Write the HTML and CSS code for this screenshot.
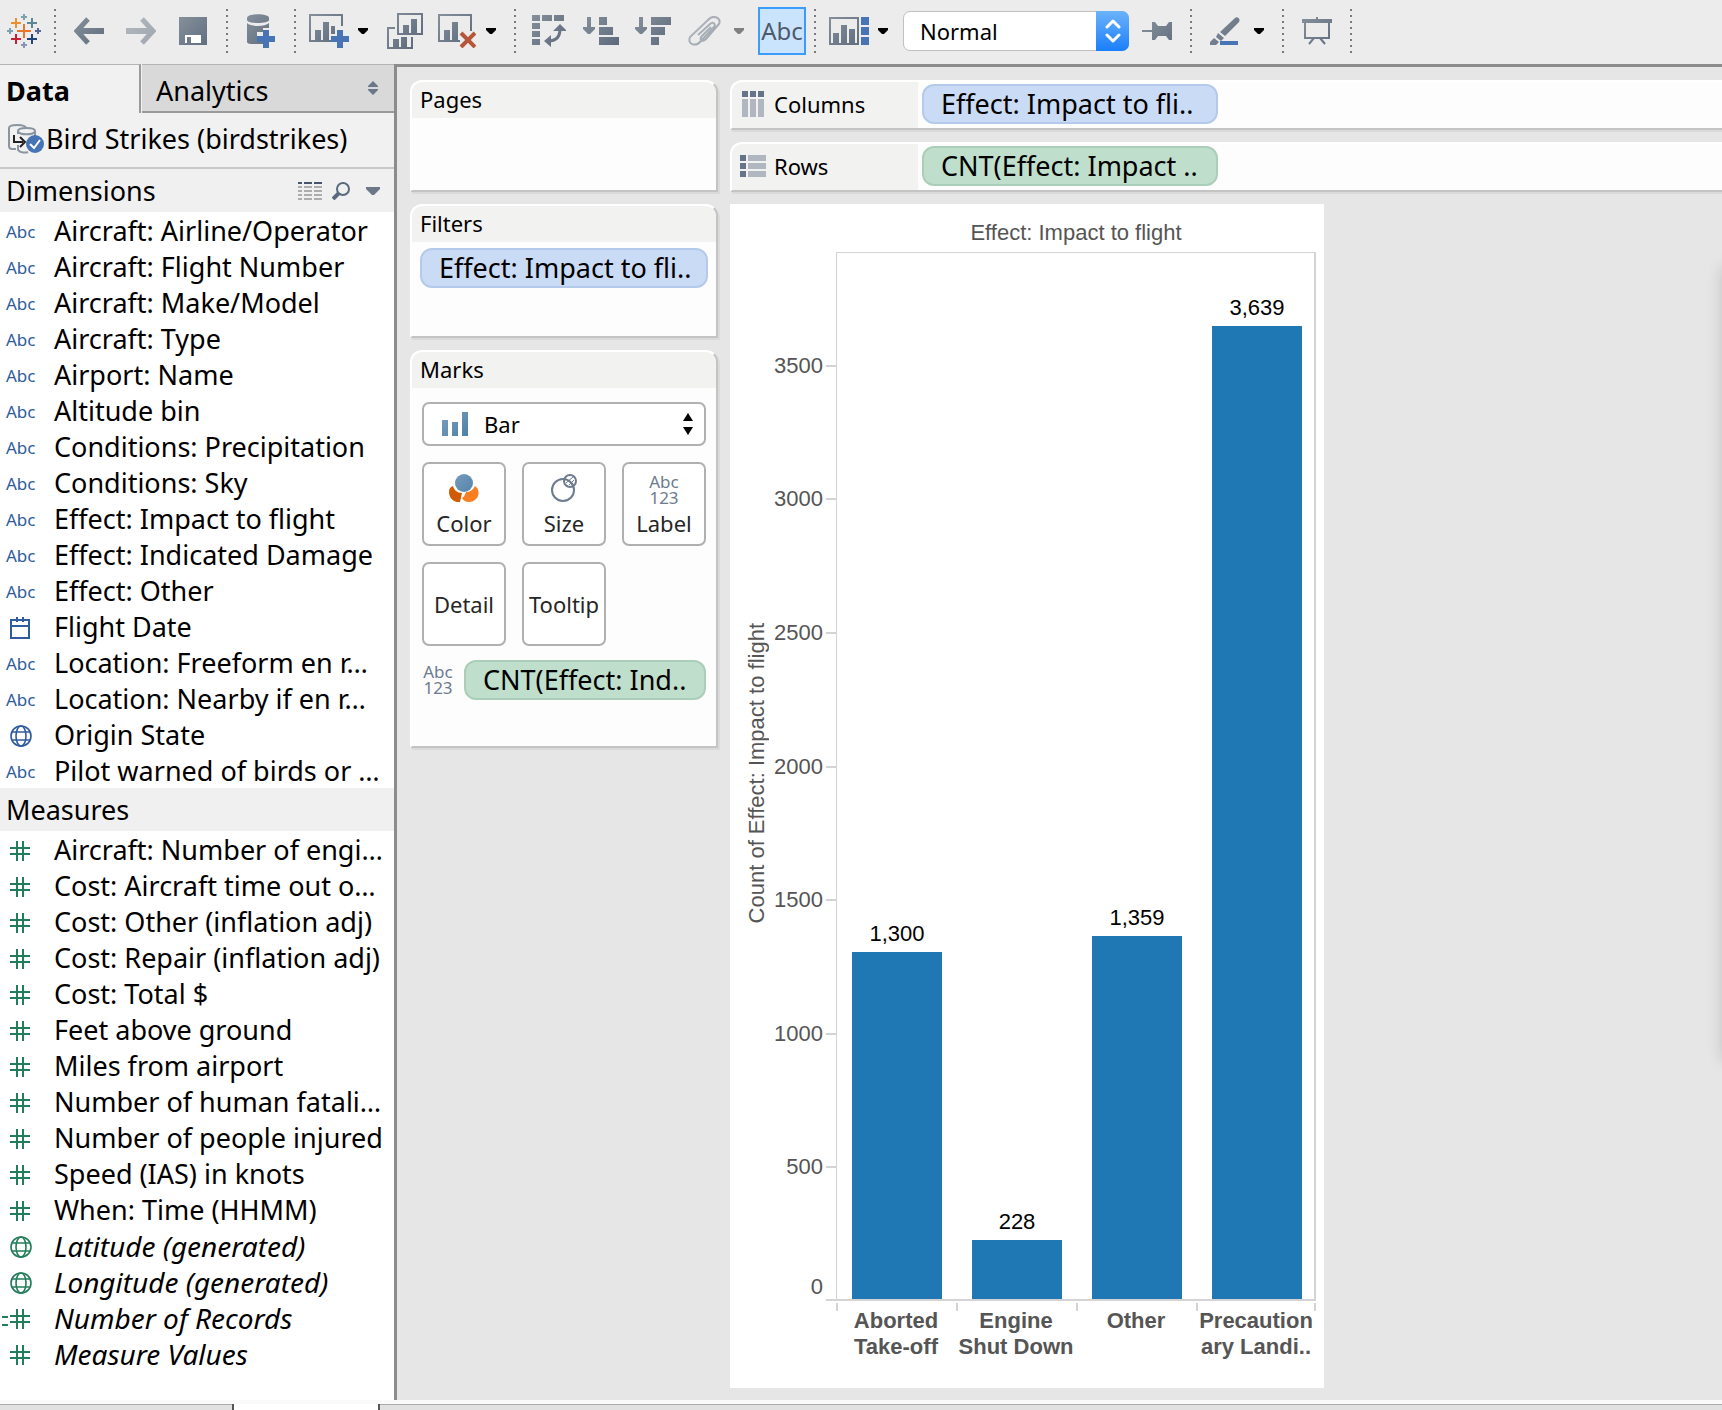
FILE: index.html
```html
<!DOCTYPE html>
<html lang="en">
<head>
<meta charset="utf-8">
<meta name="viewport" content="width=device-width, initial-scale=1">
<title>Bird Strikes</title>
<link rel="stylesheet" href="styles.css">
</head>
<body>
<svg class="defs" width="0" height="0" aria-hidden="true">
  <defs>
    <linearGradient id="slate" gradientUnits="userSpaceOnUse" x1="0" y1="0" x2="40" y2="40">
      <stop offset="0" stop-color="#86909b"/><stop offset="1" stop-color="#526074"/>
    </linearGradient>
    <linearGradient id="steel" gradientUnits="userSpaceOnUse" x1="0" y1="0" x2="26" y2="26">
      <stop offset="0" stop-color="#7d9fbf"/><stop offset="1" stop-color="#4a7fa5"/>
    </linearGradient>
    <symbol id="hash" viewBox="0 0 20 20"><path d="M7 0v20M13 0v20M0 7h20M0 13h20" fill="none" stroke="currentColor" stroke-width="2"/></symbol>
    <symbol id="globe" viewBox="0 0 22 22"><g fill="none" stroke="currentColor" stroke-width="1.6"><circle cx="11" cy="11" r="10"/><ellipse cx="11" cy="11" rx="5" ry="10"/><path d="M2 7h18M2 15h18"/></g></symbol>
    <symbol id="calendar" viewBox="0 0 20 22"><path d="M1 3h18v18H1zM1 9h18M7 0v5M13 0v5" fill="none" stroke="currentColor" stroke-width="2"/></symbol>
    <symbol id="caret" viewBox="0 0 10 6"><path d="M0 0h10v2L6 6H4L0 2z" fill="currentColor"/></symbol>
  </defs>
</svg>

<header class="toolbar">
  <button class="logo" aria-label="Start page">
    <svg width="34" height="34" viewBox="0 0 34 34" fill="none" stroke-width="2">
      <path d="M17 10v14M10 17h14" stroke="#e8762c"/>
      <path d="M9 4v10M4 9h10" stroke="#eb912c"/>
      <path d="M25 4v10M20 9h10" stroke="#5b879b"/>
      <path d="M9 20v10M4 25h10" stroke="#c72035"/>
      <path d="M25 20v10M20 25h10" stroke="#1f447e"/>
      <path d="M17 0v6M14 3h6M3 14v6M0 17h6" stroke="#7aa0b2"/>
      <path d="M31 14v6M28 17h6" stroke="#5c6692"/>
      <path d="M17 28v6M14 31h6" stroke="#8c93b5"/>
    </svg>
  </button>
  <span class="sep"></span>
  <button class="tool" aria-label="Back"><svg width="30" height="28" viewBox="0 0 30 28" fill="none" stroke="url(#slate)"><path d="M14 2L3 14l11 12" stroke-width="5"/><path d="M3 14h27" stroke-width="6"/></svg></button>
  <button class="tool faded" aria-label="Forward"><svg width="30" height="28" viewBox="0 0 30 28" fill="none" stroke="url(#slate)"><path d="M16 2l11 12-11 12" stroke-width="5"/><path d="M0 14h27" stroke-width="6"/></svg></button>
  <button class="tool" aria-label="Save"><svg width="28" height="28" viewBox="0 0 28 28"><path d="M0 0h28v28H0z" fill="url(#slate)"/><path d="M6 18h16v8H6z" fill="#fff"/><path d="M8 20h4v6H8z" fill="url(#slate)"/></svg></button>
  <span class="sep"></span>
  <button class="tool" aria-label="New data source"><svg width="28" height="34" viewBox="0 0 28 34"><path d="M0 4c0-5 22-5 22 0v2c0 4-22 4-22 0z" fill="url(#slate)"/><path d="M0 9c4 4 18 4 22 0v5h-6v4h-6v8h6v4H4c-2 0-4-1-4-2z" fill="url(#slate)"/><path d="M16 16h6v6h6v6h-6v6h-6v-6h-6v-6h6z" fill="#4674b5"/></svg></button>
  <span class="sep"></span>
  <button class="tool" aria-label="New worksheet"><svg width="40" height="34" viewBox="0 0 40 34"><path d="M1 1h32v26H1z" fill="none" stroke="url(#slate)" stroke-width="2"/><path d="M6 16h6v10H6zM14 8h6v18h-6z" fill="url(#slate)"/><path d="M26 12h10v14H20v-6h6z" fill="#ececec"/><path d="M22 12h4v8h-4z" fill="url(#slate)"/><path d="M28 16h6v6h6v6h-6v6h-6v-6h-6v-6h6z" fill="#4674b5"/></svg></button>
  <button class="drop" aria-label="New worksheet options"><svg width="10" height="6"><use href="#caret"/></svg></button>
  <button class="tool" aria-label="Duplicate"><svg width="36" height="36" viewBox="0 0 36 36"><path d="M8 15H1v20h24V24" fill="none" stroke="url(#slate)" stroke-width="2"/><path d="M6 26h6v8H6zM14 24h6v10h-6z" fill="url(#slate)"/><path d="M11 1h24v20H11z" fill="#ececec" stroke="url(#slate)" stroke-width="2"/><path d="M16 12h6v8h-6zM24 6h6v14h-6z" fill="url(#slate)"/></svg></button>
  <button class="tool" aria-label="Clear sheet"><svg width="38" height="34" viewBox="0 0 38 34"><path d="M22 27H1V1h32v16" fill="none" stroke="url(#slate)" stroke-width="2"/><path d="M6 16h6v10H6zM14 8h6v18h-6z" fill="url(#slate)"/><path d="M23 19l14 14M37 19L23 33" stroke="#b5553a" stroke-width="4"/></svg></button>
  <button class="drop" aria-label="Clear options"><svg width="10" height="6"><use href="#caret"/></svg></button>
  <span class="sep"></span>
  <button class="tool" aria-label="Swap rows and columns"><svg width="34" height="32" viewBox="0 0 34 32"><path d="M0 0h8v6H0zM10 0h10v6H10zM22 0h10v6H22zM0 8h8v6H0zM0 16h8v6H0zM0 24h8v6H0z" fill="url(#slate)"/><path d="M28 14c0 8-4 12-12 12" fill="none" stroke="url(#slate)" stroke-width="3"/><path d="M28 9l7 7H21zM12 26l7-6v12z" fill="url(#slate)"/></svg></button>
  <button class="tool" aria-label="Sort ascending"><svg width="36" height="28" viewBox="0 0 36 28"><path d="M4 0h4v10h4v2l-5 5h-2l-5-5v-2h4zM16 0h8v8h-8zM16 10h14v8H16zM16 20h20v8H16z" fill="url(#slate)"/></svg></button>
  <button class="tool" aria-label="Sort descending"><svg width="36" height="28" viewBox="0 0 36 28"><path d="M4 0h4v10h4v2l-5 5h-2l-5-5v-2h4zM16 0h20v8H16zM16 10h14v8H16zM16 20h8v8h-8z" fill="url(#slate)"/></svg></button>
  <button class="tool faded" aria-label="Group"><svg width="34" height="30" viewBox="0 0 34 30" fill="none" stroke="url(#slate)" stroke-width="2"><path d="M10 19L22 8c3-3 6 0 4 3L13 25c-5 6-14 4-11-4L20 4c5-6 14-2 11 4L18 23c-4 4-7 0-4-3l9-9"/></svg></button>
  <button class="drop muted" aria-label="Group options"><svg width="10" height="6"><use href="#caret"/></svg></button>
  <button class="tool toggle" aria-pressed="true">Abc</button>
  <span class="sep"></span>
  <button class="tool" aria-label="Show cards"><svg width="40" height="28" viewBox="0 0 40 28"><path d="M1 1h28v26H1z" fill="none" stroke="url(#slate)" stroke-width="2"/><path d="M4 16h6v10H4zM12 8h6v18h-6zM20 12h6v14h-6z" fill="url(#slate)"/><path d="M32 0h8v8h-8zM32 10h8v8h-8zM32 20h8v8h-8z" fill="#4674b5"/></svg></button>
  <button class="drop" aria-label="Card options"><svg width="10" height="6"><use href="#caret"/></svg></button>
  <div class="fit">
    <select aria-label="Fit"><option>Normal</option><option>Fit Width</option><option>Fit Height</option><option>Entire View</option></select>
    <span class="fit-arrows"><svg width="16" height="24" viewBox="0 0 16 24" fill="none" stroke="#fff" stroke-width="3" stroke-linecap="round" stroke-linejoin="round"><path d="M2 8l6-6 6 6M2 16l6 6 6-6"/></svg></span>
  </div>
  <button class="tool" aria-label="Fix axes"><svg width="30" height="18" viewBox="0 0 30 18"><path d="M0 8h10v2H0zM10 0h3l3 4h8l3-4h3v18h-3l-3-4h-8l-3 4h-3z" fill="url(#slate)"/></svg></button>
  <span class="sep"></span>
  <button class="tool" aria-label="Highlight"><svg width="30" height="28" viewBox="0 0 30 28"><path d="M25 1c2-2 6 1 4 4L15 19l-5-4z" fill="url(#slate)"/><path d="M8 16l6 5-3 3-5-4zM4 21l5 4-3 3H0v-3z" fill="url(#slate)"/><path d="M10 24h18v4H10z" fill="#4674b5"/></svg></button>
  <button class="drop" aria-label="Highlight options"><svg width="10" height="6"><use href="#caret"/></svg></button>
  <span class="sep"></span>
  <button class="tool" aria-label="Presentation mode"><svg width="30" height="28" viewBox="0 0 30 28"><path d="M14 0h2v2h14v4H0V2h14z" fill="url(#slate)"/><path d="M3 6v15h24V6M12 21l-5 6M18 21l5 6" fill="none" stroke="url(#slate)" stroke-width="2"/></svg></button>
  <span class="sep"></span>
</header>

<div class="main">
  <aside class="side">
    <div class="tabs" role="tablist">
      <button class="tab current" role="tab" aria-selected="true">Data</button>
      <button class="tab" role="tab" aria-selected="false">Analytics
        <svg width="10" height="14" viewBox="0 0 10 14"><path d="M5 0l5 5v1H0V5zM5 14l5-5V8H0v1z" fill="#6c7887"/></svg>
      </button>
    </div>
    <div class="source">
      <svg width="36" height="30" viewBox="0 0 36 30"><g fill="none" stroke="#8b95a1" stroke-width="2"><path d="M8 25H4c-2 0-3-1-3-3V4c0-4 16-4 17 0"/><path d="M10 10V7c0-4 17-4 17 0v5M10 8c3 3 14 3 17 0M10 21v5c2 3 8 3 10 2"/></g><path d="M6 11v7h9M12 13l5 5-5 5" fill="none" stroke="#222" stroke-width="2"/><circle cx="27" cy="20" r="9" fill="#4674b5"/><path d="M22 20l4 4 6-8" fill="none" stroke="#fff" stroke-width="2"/></svg>
      <span>Bird Strikes (birdstrikes)</span>
    </div>
    <div class="section">
      <h2>Dimensions</h2>
      <button aria-label="View data"><svg width="24" height="18" viewBox="0 0 24 18"><path d="M0 1h4M6 1h8M16 1h8" stroke="#46556b" stroke-width="2"/><path d="M0 5h4M6 5h8M16 5h8M0 9h4M6 9h8M16 9h8M0 13h4M6 13h8M16 13h8M0 17h4M6 17h8M16 17h8" stroke="#adadad" stroke-width="2"/></svg></button>
      <button aria-label="Find field"><svg width="18" height="18" viewBox="0 0 18 18" fill="none" stroke="#5a697c"><circle cx="11" cy="7" r="6" stroke-width="2"/><path d="M7 11l-6 6" stroke-width="4"/></svg></button>
      <button aria-label="Field options"><svg width="14" height="8" viewBox="0 0 14 8"><path d="M0 0h14v2L8 8H6L0 2z" fill="#6c7887"/></svg></button>
    </div>
    <ul class="fields dims">
      <li><i class="abc">Abc</i>Aircraft: Airline/Operator</li>
      <li><i class="abc">Abc</i>Aircraft: Flight Number</li>
      <li><i class="abc">Abc</i>Aircraft: Make/Model</li>
      <li><i class="abc">Abc</i>Aircraft: Type</li>
      <li><i class="abc">Abc</i>Airport: Name</li>
      <li><i class="abc">Abc</i>Altitude bin</li>
      <li><i class="abc">Abc</i>Conditions: Precipitation</li>
      <li><i class="abc">Abc</i>Conditions: Sky</li>
      <li><i class="abc">Abc</i>Effect: Impact to flight</li>
      <li><i class="abc">Abc</i>Effect: Indicated Damage</li>
      <li><i class="abc">Abc</i>Effect: Other</li>
      <li><i><svg width="20" height="22"><use href="#calendar"/></svg></i>Flight Date</li>
      <li><i class="abc">Abc</i>Location: Freeform en r…</li>
      <li><i class="abc">Abc</i>Location: Nearby if en r…</li>
      <li><i><svg width="22" height="22"><use href="#globe"/></svg></i>Origin State</li>
      <li><i class="abc">Abc</i>Pilot warned of birds or …</li>
    </ul>
    <div class="section"><h2>Measures</h2></div>
    <ul class="fields measures">
      <li><i><svg width="20" height="20"><use href="#hash"/></svg></i>Aircraft: Number of engi…</li>
      <li><i><svg width="20" height="20"><use href="#hash"/></svg></i>Cost: Aircraft time out o…</li>
      <li><i><svg width="20" height="20"><use href="#hash"/></svg></i>Cost: Other (inflation adj)</li>
      <li><i><svg width="20" height="20"><use href="#hash"/></svg></i>Cost: Repair (inflation adj)</li>
      <li><i><svg width="20" height="20"><use href="#hash"/></svg></i>Cost: Total $</li>
      <li><i><svg width="20" height="20"><use href="#hash"/></svg></i>Feet above ground</li>
      <li><i><svg width="20" height="20"><use href="#hash"/></svg></i>Miles from airport</li>
      <li><i><svg width="20" height="20"><use href="#hash"/></svg></i>Number of human fatali…</li>
      <li><i><svg width="20" height="20"><use href="#hash"/></svg></i>Number of people injured</li>
      <li><i><svg width="20" height="20"><use href="#hash"/></svg></i>Speed (IAS) in knots</li>
      <li><i><svg width="20" height="20"><use href="#hash"/></svg></i>When: Time (HHMM)</li>
      <li class="generated"><i><svg width="22" height="22"><use href="#globe"/></svg></i>Latitude (generated)</li>
      <li class="generated"><i><svg width="22" height="22"><use href="#globe"/></svg></i>Longitude (generated)</li>
      <li class="generated calculated"><i><svg width="20" height="20"><use href="#hash"/></svg></i>Number of Records</li>
      <li class="generated"><i><svg width="20" height="20"><use href="#hash"/></svg></i>Measure Values</li>
    </ul>
  </aside>

  <main class="work">
    <div class="cards">
      <section class="card pages"><h3>Pages</h3></section>
      <section class="card filters"><h3>Filters</h3><button class="pill blue">Effect: Impact to fli..</button></section>
      <section class="card marks">
        <h3>Marks</h3>
        <div class="mark-type">
          <select aria-label="Mark type"><option>Bar</option><option>Line</option><option>Area</option></select>
          <svg class="type-icon" width="26" height="24" viewBox="0 0 26 24"><path d="M0 8h6v16H0zM10 10h6v14h-6zM20 0h6v24h-6z" fill="url(#steel)"/></svg>
          <svg class="type-arrows" width="10" height="22" viewBox="0 0 10 22"><path d="M5 0l5 8H0zM5 22l5-8H0z"/></svg>
        </div>
        <div class="mark-buttons">
          <button class="with-icon"><svg width="30" height="28" viewBox="0 0 30 28"><path d="M0 18c0-3 1-5 4-6 1 4 4 7 9 7l-2 9C5 29 0 24 0 18z" fill="#d05a05"/><path d="M17 18c4 0 7-2 9-6 7 5 3 16-6 16-3 0-5-1-7-4 2-1 3-3 4-6z" fill="#f77f22"/><circle cx="15" cy="9" r="9" fill="url(#steel)"/></svg>Color</button>
          <button class="with-icon"><svg width="26" height="28" viewBox="0 0 26 28" fill="none" stroke="#6c7b90" stroke-width="2"><circle cx="12" cy="16" r="11"/><circle cx="19" cy="7" r="6"/><path d="M15 9l7-6M18 11l5-5" stroke-width="1"/></svg>Size</button>
          <button class="with-icon"><span class="abc123">Abc<br>123</span>Label</button>
          <button>Detail</button>
          <button>Tooltip</button>
        </div>
        <div class="mark-field"><span class="abc123">Abc<br>123</span><button class="pill green">CNT(Effect: Ind..</button></div>
      </section>
    </div>

    <div class="sheet">
      <section class="shelf">
        <h3><svg width="26" height="26" viewBox="0 0 26 26"><path d="M2 0h6v6H2zM10 0h6v6h-6zM18 0h6v6h-6z" fill="#66748a"/><path d="M2 8h6v18H2zM10 8h6v18h-6zM18 8h6v18h-6z" fill="#b0b7c0"/></svg>Columns</h3>
        <button class="pill blue">Effect: Impact to fli..</button>
      </section>
      <section class="shelf">
        <h3><svg width="26" height="26" viewBox="0 0 26 26"><path d="M0 2h6v6H0zM0 10h6v6H0zM0 18h6v6H0z" fill="#66748a"/><path d="M8 2h18v6H8zM8 10h18v6H8zM8 18h18v6H8z" fill="#b0b7c0"/></svg>Rows</h3>
        <button class="pill green">CNT(Effect: Impact ..</button>
      </section>

      <figure class="chart">
        <figcaption>Effect: Impact to flight</figcaption>
        <div class="axis-title"><span>Count of Effect: Impact to flight</span></div>
        <div class="y-axis">
          <span style="bottom:89.34%">3500</span>
          <span style="bottom:76.58%">3000</span>
          <span style="bottom:63.82%">2500</span>
          <span style="bottom:51.05%">2000</span>
          <span style="bottom:38.29%">1500</span>
          <span style="bottom:25.53%">1000</span>
          <span style="bottom:12.76%">500</span>
          <span class="zero" style="bottom:0%">0</span>
        </div>
        <div class="plot">
          <div class="slot"><b>1,300</b><div class="bar" style="height:33.19%"></div></div>
          <div class="slot"><b>228</b><div class="bar" style="height:5.64%"></div></div>
          <div class="slot"><b>1,359</b><div class="bar" style="height:34.69%"></div></div>
          <div class="slot"><b>3,639</b><div class="bar" style="height:92.9%"></div></div>
        </div>
        <div class="x-axis">
          <span>Aborted<br>Take-off</span>
          <span>Engine<br>Shut Down</span>
          <span>Other</span>
          <span>Precaution<br>ary Landi..</span>
        </div>
      </figure>
    </div>
  </main>
</div>
<footer class="sheet-tabs"><span></span></footer>
</body>
</html>
```
FILE: styles.css
```css
* { box-sizing: border-box; }

body {
  margin: 0;
  min-height: 100vh;
  display: flex;
  flex-direction: column;
  background: #ececec;
  color: #000;
  font: 27px/36px "Noto Sans", "Open Sans", sans-serif;
}

h2, h3, ul, figure { margin: 0; padding: 0; font-weight: 400; font-size: inherit; }
ul { list-style: none; }
button, select { font: inherit; color: inherit; margin: 0; padding: 0; border: 0; background: none; white-space: nowrap; }
select { appearance: none; }
svg { display: block; flex: none; }
.defs { position: absolute; }

/* Toolbar */
.toolbar { display: flex; align-items: center; height: 64px; padding-bottom: 2px; }
.toolbar > * { flex: none; }
.logo { width: 47px; display: flex; justify-content: center; }
.tool { width: 52px; height: 48px; display: flex; align-items: center; justify-content: center; }
.faded { opacity: .55; }
.drop { width: 24px; height: 48px; padding-left: 3px; display: flex; align-items: center; }
.muted { color: #808080; }
.sep {
  width: 2px;
  height: 44px;
  margin: 0 7px;
  background: repeating-linear-gradient(#7a7a7a 0 2px, transparent 2px 6px);
}
.toggle {
  width: 48px;
  margin: 0 1px 0 3px;
  border: 2px solid #3d9bfd;
  background: #cbe4fe;
  color: #4e5a6c;
  font-size: 24px;
}
.fit {
  position: relative;
  width: 226px;
  height: 40px;
  margin: 0 2px 0 4px;
}
.fit select {
  width: 100%;
  height: 100%;
  padding-left: 16px;
  border: 1px solid #c0c0c0;
  border-radius: 7px;
  background: #fff;
  font-size: 22px;
}
.fit-arrows {
  position: absolute;
  inset: 0 0 0 auto;
  width: 33px;
  display: flex;
  align-items: center;
  justify-content: center;
  border-radius: 0 7px 7px 0;
  background: linear-gradient(#6bb3fa, #1a7efb);
  pointer-events: none;
}

.main { flex: 1; display: flex; }

/* Data pane */
.side {
  flex: none;
  width: 397px;
  background: #fff;
  border-right: 3px solid #8c8c8c;
}
.tabs { display: flex; height: 49px; background: #f1f1f1; }
.tab {
  flex: 1;
  display: flex;
  align-items: center;
  justify-content: space-between;
  margin-left: 1px;
  padding: 6px 16px 0 14px;
  border-top: 1px solid #b4b4b4;
  border-bottom: 2px solid #9a9a9a;
  background: #d9d9d9;
}
.tab svg { margin-bottom: 6px; }
.tab.current {
  flex: none;
  width: 141px;
  margin: 0;
  padding: 4px 6px 0;
  border-right: 2px solid #9a9a9a;
  border-bottom: 0;
  background: #f1f1f1;
  font-weight: 700;
}
.source {
  display: flex;
  align-items: center;
  gap: 2px;
  height: 56px;
  padding: 0 8px 2px;
  background: #f1f1f1;
  border-bottom: 2px solid #c8c8c8;
  white-space: nowrap;
}
.section {
  display: flex;
  align-items: center;
  gap: 10px;
  height: 43px;
  padding: 0 14px 0 6px;
  background: #f0f0f0;
}
.section h2 { flex: 1; }
.section button:last-child { margin-left: 6px; }
.fields li {
  position: relative;
  display: flex;
  height: 36px;
  line-height: 38px;
  white-space: nowrap;
}
.fields i {
  width: 54px;
  height: 40px;
  padding-left: 10px;
  display: flex;
  align-items: center;
  font-style: normal;
}
.fields .abc { padding-left: 6px; font-size: 17px; }
.dims i { color: #2f5c9f; }
.measures i { color: #237d5b; }
.generated { font-size: 28px; font-style: italic; }
.calculated::before {
  content: "";
  position: absolute;
  left: 2px;
  top: 17px;
  width: 6px;
  height: 6px;
  border: solid #237d5b;
  border-width: 2px 0;
}

/* Worksheet area */
.work {
  position: relative;
  overflow: hidden;
  flex: 1;
  min-width: 0;
  display: flex;
  gap: 12px;
  padding: 13px 0 12px 13px;
  background: #e6e6e6;
  border-top: 3px solid #8c8c8c;
}
.work::after {
  content: "";
  position: absolute;
  left: 100%;
  top: 200px;
  bottom: 340px;
  width: 40px;
  box-shadow: 0 0 16px rgba(0, 0, 0, .16);
}
.cards { flex: none; width: 308px; display: flex; flex-direction: column; gap: 12px; }
.card, .shelf {
  border: 2px solid #fff;
  border-bottom-color: #c4c4c4;
  border-radius: 12px 0 0 0;
  background: #fdfdfd;
  box-shadow: 2px 2px 0 #dadada;
}
.card { border-right-color: #c4c4c4; border-top-right-radius: 12px; }
.card h3, .shelf h3 { background: #f2f2f0; font-size: 22px; line-height: 34px; }
.card h3 { height: 36px; padding-left: 8px; border-radius: 10px 10px 0 0; }
.pages { height: 112px; }
.filters { height: 134px; }
.marks { height: 398px; }
.pill {
  display: block;
  height: 40px;
  padding: 0 17px;
  border: 2px solid #b3caea;
  border-radius: 12px;
  background: #cadbf5;
  text-align: left;
}
.pill.green { border-color: #aaceba; background: #bfdfcc; }
.filters .pill { width: 288px; margin: 6px 8px; }

.mark-type { position: relative; height: 44px; margin: 14px 10px 16px; }
.mark-type select {
  width: 100%;
  height: 100%;
  padding-left: 60px;
  border: 2px solid #b0b0b0;
  border-radius: 7px;
  background: #fff;
  font-size: 22px;
}
.type-icon { position: absolute; left: 20px; top: 10px; pointer-events: none; }
.type-arrows { position: absolute; right: 13px; top: 11px; pointer-events: none; }
.mark-buttons { display: grid; grid-template-columns: repeat(3, 84px); gap: 16px; margin: 0 10px; }
.mark-buttons button {
  height: 84px;
  display: flex;
  flex-direction: column;
  align-items: center;
  justify-content: center;
  border: 2px solid #b0b0b0;
  border-radius: 7px;
  background: #fff;
  color: #262626;
  font-size: 22px;
  line-height: 30px;
}
.mark-buttons .with-icon { justify-content: space-between; padding: 10px 0 6px; }
.abc123 {
  width: 32px;
  color: #6c7b90;
  font-size: 17px;
  line-height: 16px;
  text-align: center;
}
.mark-field { display: flex; align-items: center; gap: 10px; margin: 14px 10px; }
.mark-field .pill { flex: 1; }

.sheet { flex: 1; min-width: 0; display: flex; flex-direction: column; gap: 12px; }
.shelf { display: flex; height: 50px; border-right: 0; }
.shelf h3 {
  flex: none;
  width: 186px;
  display: flex;
  align-items: center;
  gap: 8px;
  padding: 0 0 2px 8px;
  border-radius: 10px 0 0 0;
}
.shelf .pill { width: 296px; margin: 2px 4px; }

/* Bar chart */
.chart {
  width: 594px;
  flex: 1;
  display: grid;
  grid-template: 48px minmax(600px, 1fr) 89px / 50px 56px 480px;
  background: #fff;
  color: #555;
  font: 22px/26px "Liberation Sans", Arial, sans-serif;
}
.chart figcaption { grid-column: 3; align-self: center; text-align: center; padding-top: 10px; }
.axis-title { grid-area: 2 / 1; display: flex; align-items: center; justify-content: center; padding: 0 0 4px 4px; }
.axis-title span { writing-mode: vertical-rl; transform: rotate(180deg); white-space: nowrap; }
.y-axis { grid-area: 2 / 2; position: relative; }
.y-axis span {
  position: absolute;
  right: 0;
  display: flex;
  align-items: center;
  gap: 3px;
  margin-bottom: -15px;
}
.y-axis span::after { content: ""; width: 10px; height: 2px; background: #d4d4d4; }
.y-axis .zero { align-items: flex-end; margin: 0 0 -2px; line-height: 28px; }
.plot {
  grid-area: 2 / 3;
  display: grid;
  grid-template-columns: repeat(4, 1fr);
  box-shadow: inset -2px 0 #d4d4d4, inset 1px 1px #d4d4d4;
}
.slot { display: flex; flex-direction: column; align-items: center; justify-content: flex-end; padding-left: 2px; }
.slot b { color: #000; font-weight: 400; padding-bottom: 5px; }
.bar { width: 90px; background: #1f77b4; }
.x-axis {
  grid-area: 3 / 3;
  display: grid;
  grid-template-columns: repeat(4, 1fr);
  border-top: 2px solid #d4d4d4;
  text-align: center;
  font-weight: 700;
  white-space: nowrap;
}
.x-axis span {
  padding-top: 7px;
  background: linear-gradient(#d4d4d4, #d4d4d4) 0 2px / 2px 8px no-repeat;
}
.x-axis span:last-child { background: linear-gradient(#d4d4d4, #d4d4d4) 0 2px / 2px 8px no-repeat, linear-gradient(#d4d4d4, #d4d4d4) 100% 2px / 2px 8px no-repeat; }

.sheet-tabs { height: 10px; padding-left: 232px; border-top: 4px solid #fafafa; background: #e1e1e1; box-shadow: inset 0 1px #aaa; }
.sheet-tabs span { display: block; width: 148px; height: 6px; border: solid #555; border-width: 0 2px; background: #fff; }
```
